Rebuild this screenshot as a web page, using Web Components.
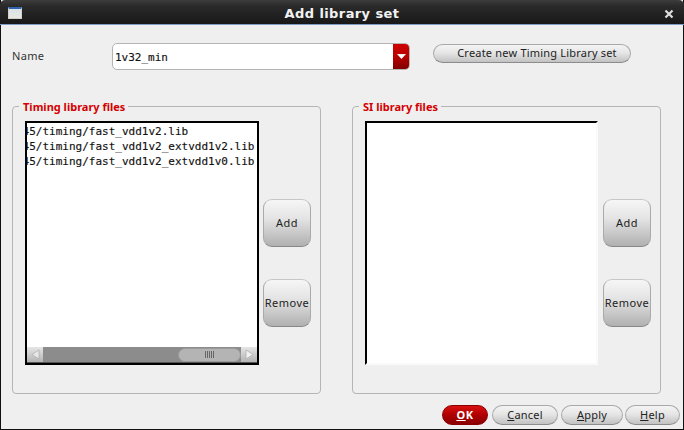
<!DOCTYPE html>
<html><head><meta charset="utf-8">
<style>
html,body{margin:0;padding:0;background:#efefef}
body{width:684px;height:430px;overflow:hidden;font:11px "Noto Sans",sans-serif;color:#222}
</style></head>
<body>
<x-dialog title-text="Add library set">
  <x-name-row slot="top"></x-name-row>
  <x-group slot="left" legend="Timing library files" scroll>
    <div>45/timing/fast_vdd1v2.lib</div>
    <div>45/timing/fast_vdd1v2_extvdd1v2.lib</div>
    <div>45/timing/fast_vdd1v2_extvdd1v0.lib</div>
  </x-group>
  <x-group slot="right" legend="SI library files"></x-group>
  <x-btn slot="foot" variant="primary" style="width:46px;margin-right:4px"><b><u>O</u>K</b></x-btn>
  <x-btn slot="foot" style="width:66px;margin-right:3px"><u>C</u>ancel</x-btn>
  <x-btn slot="foot" style="width:62px;margin-right:2px"><u>A</u>pply</x-btn>
  <x-btn slot="foot" style="width:55px"><u>H</u>elp</x-btn>
</x-dialog>
<script>
function def(name,html,cls){
  const t=document.createElement('template');t.innerHTML=html;
  customElements.define(name,class extends HTMLElement{
    connectedCallback(){
      if(this.shadowRoot)return;
      const r=this.attachShadow({mode:'open'});
      r.appendChild(t.content.cloneNode(true));
      if(cls)cls(this,r);
    }
  });
}
def('x-dialog',`<style>
:host{display:block;width:684px;height:430px;box-sizing:border-box;border:solid #111;border-width:0 1px 1px 1px;background:#efefef;position:relative}
.tb{height:25px;margin:0 -1px;box-sizing:border-box;border-radius:5px 5px 0 0;background:linear-gradient(#3d3d3d,#2a2a2a 25%,#181818);border-bottom:1px solid #7f9cc4;display:flex;align-items:center;padding:2px 8px 0;color:#f2f2f2}
.ic{width:14px;height:12px;box-sizing:border-box;border:1px solid #cfcfcf;border-top:2px solid #2f63b0;background:linear-gradient(#d8e2ea,#e8e8e0)}
.t{flex:1;text-align:center;font:bold 13px "DejaVu Sans",sans-serif;letter-spacing:.4px}
.x{width:14px;height:14px;margin-right:0;margin-top:2px}
.top{height:81px;box-sizing:border-box;padding:18px 0 0 11px}
.mid{display:flex;gap:31px;padding-left:11px}
.foot{display:flex;justify-content:flex-end;padding:11px 3px 0 0}
</style>
<div class="tb"><div class="ic"></div><div class="t" id="t"></div>
<svg class="x" viewBox="0 0 14 14"><path d="M3.500 3.500l7 7M10.500 3.500l-7 7" stroke="#dedede" stroke-width="2.200" fill="none"/></svg></div>
<div class="top"><slot name="top"></slot></div>
<div class="mid"><slot name="left"></slot><slot name="right"></slot></div>
<div class="foot"><slot name="foot"></slot></div>`,(h,r)=>{r.getElementById('t').textContent=h.getAttribute('title-text')});

def('x-btn',`<style>
:host{display:flex;align-items:center;justify-content:center;box-sizing:border-box;height:20px;padding-bottom:2px;border:1px solid #a9a9a9;border-bottom-color:#8c8c8c;border-radius:10px;background:linear-gradient(#f4f4f4,#e6e6e6 45%,#c2c2c2);color:#222;font:11px "Noto Sans",sans-serif;letter-spacing:.2px;white-space:nowrap;overflow:hidden;flex:none}
:host([variant=primary]){background:linear-gradient(#d81010,#b00000 50%,#8a0000);border-color:#8a0000;color:#fff;letter-spacing:.6px}
:host([square]){border-radius:9px;width:48px;height:48px;background:linear-gradient(#f6f6f6,#e4e4e4 40%,#b0b0b0);border-color:#c6c6c6 #aaa #888;letter-spacing:.5px}
</style><slot></slot>`);

def('x-name-row',`<style>
:host{display:flex;align-items:flex-start}
.l{width:100px;height:27px;font:11px/26px "Noto Sans",sans-serif;letter-spacing:.3px;color:#333}
.c{width:298px;height:27px;box-sizing:border-box;border:1px solid #b4b4b4;border-radius:5px;background:#fff;display:flex;overflow:hidden;margin-right:23px}
.v{flex:1;font:11px/28px "DejaVu Sans Mono",monospace;color:#111;padding-left:2px;-webkit-text-stroke:.15px #111}
.a{width:16px;background:linear-gradient(#d00000,#b80000 50%,#800000);display:flex;align-items:center;justify-content:center}
x-btn{width:198px;height:19px;margin-top:1px;letter-spacing:.2px;padding-left:10px}
</style>
<div class="l">Name</div>
<div class="c"><div class="v">1v32_min</div><div class="a"><svg width="9" height="6" viewBox="0 0 9 6"><path d="M0 0h9L4.500 5z" fill="#fff"/><path d="M1 0h7" stroke="#ddd"/></svg></div></div>
<x-btn>Create new Timing Library set</x-btn>`);

def('x-group',`<style>
:host{display:block;width:309px;height:288px;box-sizing:border-box;border:1px solid #b5b5b5;border-radius:4px;position:relative;padding:14px 0 0 12px}
.lg{position:absolute;left:6px;top:-7px;background:#efefef;padding:0 3px 0 4px;font:bold 11px/13px "Noto Sans",sans-serif;color:#d40000}
.row{display:flex;gap:4px}
.list{width:234px;height:244px;box-sizing:border-box;border:2px solid #000;background:#fff;display:flex;flex-direction:column;overflow:hidden}
:host(:not([scroll])) .list{border-color:#000 #fafafa #fafafa #000;width:233px}
.items{flex:1;overflow:hidden;font:11px/15px "DejaVu Sans Mono",monospace;color:#111;padding-top:1px;white-space:nowrap;-webkit-text-stroke:.15px #111}
.in{margin-left:-4.4px}
.sb{height:16px;box-sizing:border-box;display:none;background:#8c8c8c;border-bottom:1px solid #555;flex:none}
:host([scroll]) .sb{display:flex}
.ar{width:16px;height:15px;background:linear-gradient(#e6e6e6,#b4b4b4);display:flex;align-items:center;justify-content:center;flex:none}
.tr{flex:1;display:flex;justify-content:flex-end;align-items:center}
.th{width:63px;height:14px;box-sizing:border-box;border:1px solid #9a9a9a;border-radius:7px;background:#b4b4b4;display:flex;align-items:center;justify-content:center}
.bs{display:flex;flex-direction:column;gap:32px;padding-top:78px}
</style>
<div class="lg" id="lg"></div>
<div class="row">
  <div class="list">
    <div class="items"><div class="in"><slot></slot></div></div>
    <div class="sb">
      <div class="ar"><svg width="9" height="11" viewBox="0 0 9 11"><path d="M8 1v9L1 5.500z" fill="#e8e8e8" stroke="#aaa" stroke-width=".7"/></svg></div>
      <div class="tr"><div class="th"><svg width="9" height="7" viewBox="0 0 9 7"><path d="M.5 0v7M2.500 0v7M4.500 0v7M6.500 0v7M8.500 0v7" stroke="#666"/></svg></div></div>
      <div class="ar"><svg width="9" height="11" viewBox="0 0 9 11"><path d="M1 1v9l7-4.500z" fill="#f2f2f2" stroke="#aaa" stroke-width=".7"/></svg></div>
    </div>
  </div>
  <div class="bs"><x-btn square>Add</x-btn><x-btn square>Remove</x-btn></div>
</div>`,(h,r)=>{
  r.getElementById('lg').textContent=h.getAttribute('legend');
  if(!h.hasAttribute('scroll')) r.querySelector('.row').style.gap='5px';
});
</script>
</body></html>
